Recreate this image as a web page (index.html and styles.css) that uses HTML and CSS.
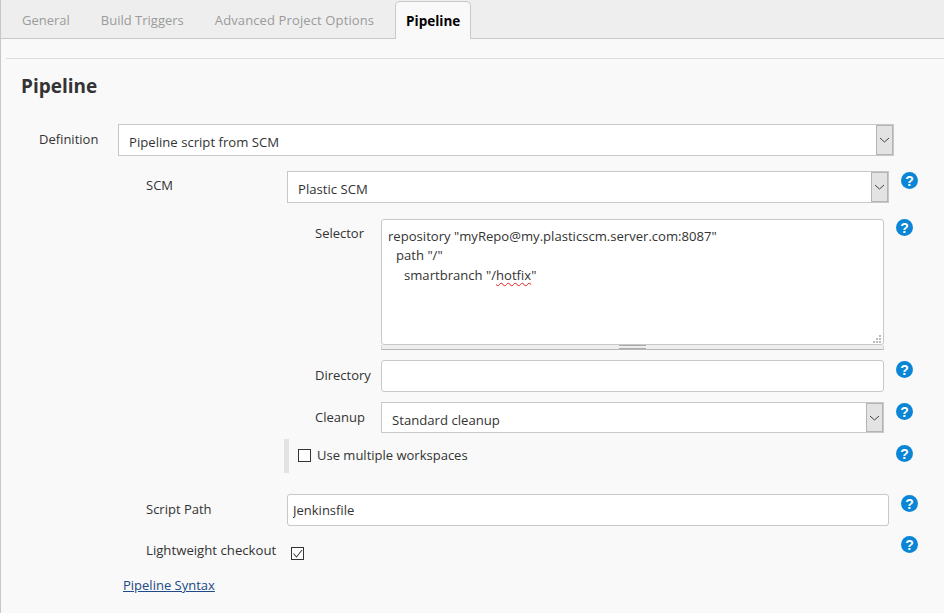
FILE: index.html
```html
<!DOCTYPE html>
<html lang="en">
<head>
    <meta charset="UTF-8">
    <meta name="viewport" content="width=device-width, initial-scale=1.0">
    <title>Pipeline</title>
    <link rel="stylesheet" href="styles.css">
</head>
<body>

<div id="tab-bar">
    <a class="tab">General</a>
    <a class="tab">Build Triggers</a>
    <a class="tab tab-wide">Advanced Project Options</a>
    <a class="tab active">Pipeline</a>
</div>

<div id="content">
    <div class="section-line"></div>
    <h2>Pipeline</h2>

    <div class="row row-def">
        <label>Definition</label>
        <div class="select">
            <span class="select-text">Pipeline script from SCM</span>
            <span class="select-arrow"><svg width="11" height="6" viewBox="0 0 11 6"><path d="M1 1l4.5 4L10 1" fill="none" stroke="#444" stroke-width="1"/></svg></span>
        </div>
    </div>

    <div class="row row-scm row-first">
        <label>SCM</label>
        <div class="select">
            <span class="select-text">Plastic SCM</span>
            <span class="select-arrow"><svg width="11" height="6" viewBox="0 0 11 6"><path d="M1 1l4.5 4L10 1" fill="none" stroke="#444" stroke-width="1"/></svg></span>
        </div>
        <span class="help">?</span>
    </div>

    <div class="row row-sub row-selector">
        <label>Selector</label>
        <div class="textarea-wrap">
            <div class="textarea">
                <div>repository "myRepo@my.plasticscm.server.com:8087"</div>
                <div class="indent-1">path "/"</div>
                <div class="indent-2">smartbranch "/<span class="misspelled">hotfix</span>"</div>
                <svg class="resize-grip" width="9" height="9" viewBox="0 0 9 9" fill="#bbb">
                    <rect x="6" y="0" width="2" height="2"/>
                    <rect x="3" y="3" width="2" height="2"/><rect x="6" y="3" width="2" height="2"/>
                    <rect x="0" y="6" width="2" height="2"/><rect x="3" y="6" width="2" height="2"/><rect x="6" y="6" width="2" height="2"/>
                </svg>
            </div>
            <div class="grippie"><span class="grippie-handle"></span></div>
        </div>
        <span class="help">?</span>
    </div>

    <div class="row row-sub row-directory">
        <label>Directory</label>
        <input class="text-input" type="text">
        <span class="help">?</span>
    </div>

    <div class="row row-sub row-cleanup">
        <label>Cleanup</label>
        <div class="select select-short">
            <span class="select-text">Standard cleanup</span>
            <span class="select-arrow"><svg width="11" height="6" viewBox="0 0 11 6"><path d="M1 1l4.5 4L10 1" fill="none" stroke="#444" stroke-width="1"/></svg></span>
        </div>
        <span class="help">?</span>
    </div>

    <div class="row row-workspaces">
        <div class="optional-block">
            <span class="checkbox"></span>
            <span>Use multiple workspaces</span>
        </div>
        <span class="help">?</span>
    </div>

    <div class="row row-scm row-script">
        <label>Script Path</label>
        <input class="text-input" type="text" value="Jenkinsfile">
        <span class="help">?</span>
    </div>

    <div class="row row-scm row-light">
        <label class="label-wide">Lightweight checkout</label>
        <div class="check-cell">
            <span class="checkbox">
                <svg width="11" height="11" viewBox="0 0 11 11"><path d="M1.5 5.5l3 3.5L10 2" fill="none" stroke="#444" stroke-width="1.1"/></svg>
            </span>
        </div>
        <span class="help">?</span>
    </div>

    <a class="syntax-link" href="#">Pipeline Syntax</a>
</div>

</body>
</html>
```

FILE: styles.css
```css
:root {
    --page-background: #f9f9f9;
    --tab-background: #eeeeee;
    --border: #c8c8c8;
    --text: #333333;
    --help-blue: #0b86d6;
}

* {
    box-sizing: border-box;
}

html, body {
    height: 613px;
    overflow: hidden;
}

body {
    margin: 0;
    background-color: var(--page-background);
    color: var(--text);
    font-family: "Open Sans", "Noto Sans", sans-serif;
    font-size: 13px;
}

#tab-bar {
    display: flex;
    align-items: flex-end;
    height: 39px;
    padding-left: 5px;
    background-color: var(--tab-background);
    border-bottom: 1px solid var(--border);
    border-left: 1px solid var(--border);
}

.tab {
    padding: 0 15px 9px 16px;
    color: #9b9b9b;
}

.tab-wide {
    letter-spacing: 0.12px;
}

.tab.active {
    width: 76px;
    height: 38px;
    margin-bottom: -1px;
    margin-left: 6px;
    padding: 10px 0 0;
    background-color: var(--page-background);
    border: 1px solid var(--border);
    border-bottom: none;
    border-radius: 5px 5px 0 0;
    color: #000000;
    font-size: 13.5px;
    font-weight: 700;
    text-align: center;
}

#content {
    height: 574px;
    padding-top: 19px;
    border-left: 1px solid var(--border);
}

.section-line {
    height: 1px;
    margin-left: 5px;
    background-color: #dddddd;
}

h2 {
    margin: 14px 0 0 20px;
    height: 51px;
    font-size: 19px;
    line-height: 27px;
    font-weight: 700;
}

.row {
    display: flex;
    align-items: flex-start;
}

.row label {
    flex: none;
    padding-top: 6px;
}

.row-def {
    height: 47px;
    padding-left: 38px;
}

.row-def label {
    width: 79px;
}

.row-def .select {
    width: 776px;
}

.row-scm {
    padding-left: 145px;
}

.row-scm label {
    width: 141px;
}

.row-scm .select, .row-scm .text-input {
    width: 602px;
}

.row-first {
    height: 48px;
}

.row-first label, .row-selector label {
    padding-top: 5px;
}

.row-sub {
    padding-left: 314px;
}

.row-sub label {
    width: 66px;
}

.row-sub .text-input, .row-sub .select, .textarea-wrap {
    width: 503px;
}

.row-selector {
    height: 141px;
}

.row-directory {
    height: 42px;
}

.row-cleanup {
    height: 37px;
}

.row-workspaces {
    height: 55px;
    padding-left: 283px;
}

.row-script {
    height: 41px;
}

.row-light {
    height: 41px;
}

.label-wide {
    font-size: 13.2px;
}

.select {
    display: flex;
    height: 32px;
    background-color: #ffffff;
    border: 1px solid var(--border);
}

.select-short {
    height: 31px;
}

.select-text {
    flex: 1;
    padding: 8px 0 0 10px;
    line-height: 18px;
    font-size: 13.15px;
    color: var(--text);
}

.select-arrow {
    display: flex;
    align-items: center;
    justify-content: center;
    width: 17px;
    background-color: #e3e3e3;
    border: 1px solid #b4b4b4;
}

.text-input {
    height: 32px;
    padding: 0 5px;
    background-color: #ffffff;
    border: 1px solid var(--border);
    border-radius: 3px;
    color: var(--text);
    font: inherit;
}

.textarea {
    position: relative;
    height: 126px;
    padding: 7px 6px;
    background-color: #ffffff;
    border: 1px solid var(--border);
    border-radius: 3px;
    line-height: 19.25px;
    font-size: 13.1px;
}

.indent-1 {
    padding-left: 8px;
}

.indent-2 {
    padding-left: 16px;
}

.misspelled {
    text-decoration: underline wavy #e02020 1px;
    text-underline-offset: 2px;
}

.resize-grip {
    position: absolute;
    right: 1px;
    bottom: 0;
}

.grippie {
    display: flex;
    justify-content: center;
    height: 5px;
    background-color: #eeeeee;
    border-bottom: 1px solid #b8b8b8;
    border-left: 1px solid #d8d8d8;
    border-right: 1px solid #d8d8d8;
}

.grippie-handle {
    width: 27px;
    height: 4px;
    border-top: 1px solid #aaaaaa;
    border-bottom: 1px solid #aaaaaa;
}

.help {
    flex: none;
    display: flex;
    align-items: center;
    justify-content: center;
    width: 17px;
    height: 17px;
    margin: 1px 0 0 12px;
    border-radius: 50%;
    background-color: var(--help-blue);
    color: #ffffff;
    font-family: "Liberation Sans", sans-serif;
    font-size: 14px;
    font-weight: 700;
}

.row-selector .help {
    margin-top: 0;
}

.optional-block {
    display: flex;
    align-items: center;
    gap: 6px;
    width: 609px;
    height: 34px;
    padding: 0 0 2px 9px;
    border-left: 5px solid #e3e3e3;
    margin-right: 3px;
}

.row-workspaces .help {
    margin: 6px 0 0 0;
}

.checkbox {
    flex: none;
    display: flex;
    align-items: center;
    justify-content: center;
    width: 13px;
    height: 13px;
    background-color: #ffffff;
    border: 1px solid #333333;
}

.check-cell {
    width: 602px;
    padding: 12px 0 0 4px;
}

.syntax-link {
    display: inline-block;
    margin-left: 122px;
    color: #204a87;
    text-decoration: underline;
}
```
